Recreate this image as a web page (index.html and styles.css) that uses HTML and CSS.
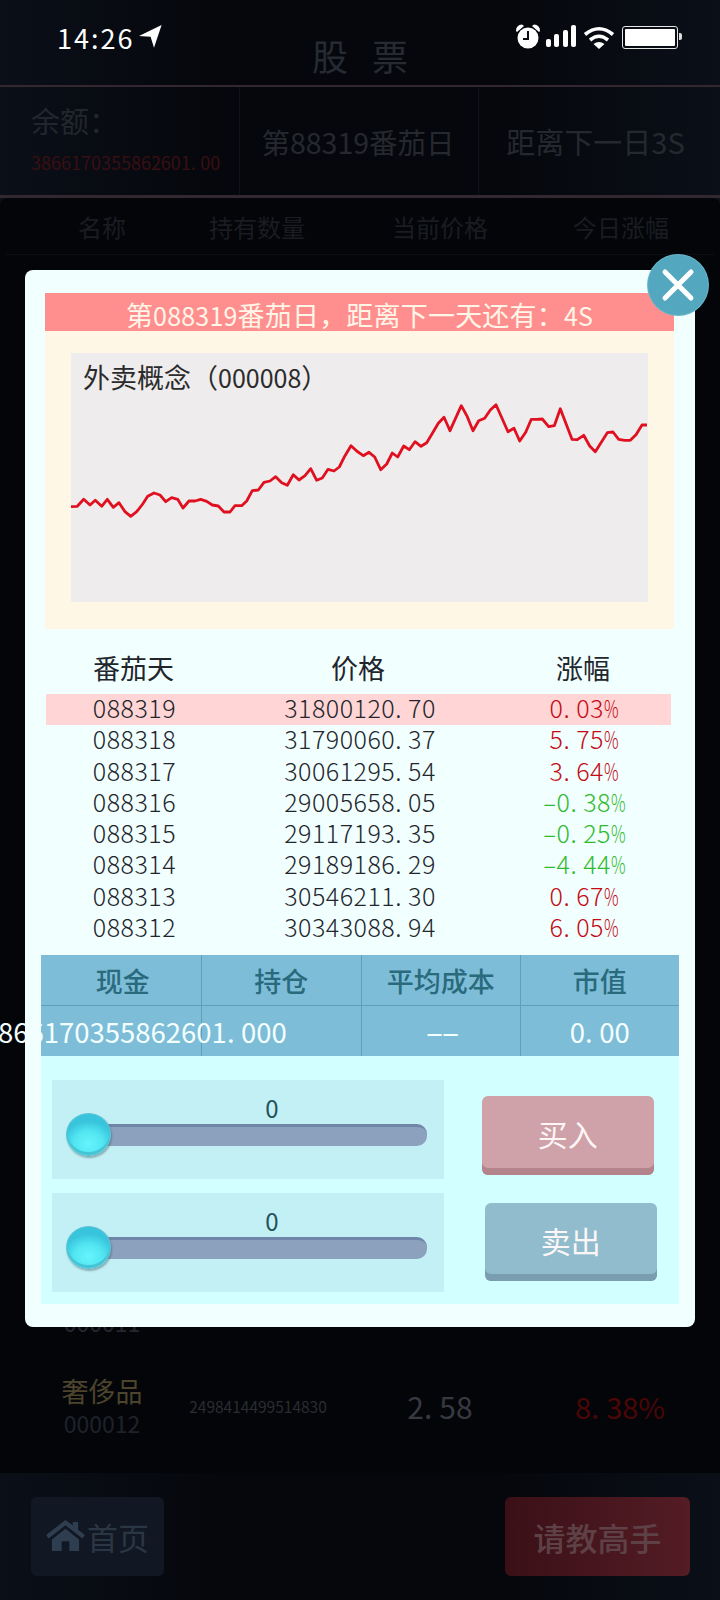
FILE: index.html
```html
<!DOCTYPE html>
<html lang="zh">
<head>
<meta charset="utf-8">
<title>股票</title>
<link rel="stylesheet" href="styles.css">
</head>
<body>
<div class="page">
  <header class="header">
    <div class="status">
      <div class="status-left">
        <span class="clock">14:26</span>
        <svg class="arrow" viewBox="0 0 23 23"><polygon points="22.6,0 0,11 11.6,11.7 15,22.7" fill="#fff"/></svg>
      </div>
      <div class="status-right">
        <svg class="alarm" viewBox="0 0 26 25"><path d="M1 7 Q1 1 7 0.5 L9 2 L2 8z M25 7 Q25 1 19 0.5 L17 2 L24 8z" fill="#fff"/><circle cx="13" cy="14" r="10.5" fill="#fff"/><path d="M13 7v8H8" fill="none" stroke="#0a0d15" stroke-width="2"/></svg>
        <div class="bars"><i class="b1"></i><i class="b2"></i><i class="b3"></i><i class="b4"></i></div>
        <svg class="wifi" viewBox="0 0 32 23"><path d="M2 8.500 Q16 -3 30 8.500 M7 14 Q16 6.500 25 14" fill="none" stroke="#fff" stroke-width="3.600"/><path d="M16 23 L10.500 18 Q16 14 21.500 18z" fill="#fff"/></svg>
        <div class="battery"><div class="battery-fill"></div></div>
      </div>
    </div>
    <h1 class="title">股票</h1>
  </header>
  <section class="info">
    <div class="info-cell info-balance">
      <div class="balance-label">余额：</div>
      <div class="balance-value">3866170355862601<span class="dot-sm">.</span>00</div>
    </div>
    <div class="info-cell info-day">第88319番茄日</div>
    <div class="info-cell info-next">距离下一日3S</div>
  </section>
  <section class="panel">
    <div class="panel-head">
      <span>名称</span><span>持有数量</span><span>当前价格</span><span>今日涨幅</span>
    </div>
    <div class="stock-list">
      <div class="stock">
        <div class="stock-name"><span class="name-text">&nbsp;</span><span class="code code-top">000011</span></div>
      </div>
      <div class="stock">
        <div class="stock-name"><span class="name-text">奢侈品</span><span class="code">000012</span></div>
        <div class="stock-qty">2498414499514830</div>
        <div class="stock-price">2<span class="dot">.</span>58</div>
        <div class="stock-change">8<span class="dot">.</span>38%</div>
      </div>
    </div>
  </section>
  <footer class="footer">
    <div class="btn-home">
      <svg class="home-icon" viewBox="0 0 40 32"><path d="M20 0 L0 15.500 L2.500 19 L20 5.500 L37.500 19 L40 15.500 L33 10 V2 H27.500 V5.800z" fill="#2e3d50"/><path d="M6 20 L20 9 L34 20 V32 H24 V22 H16 V32 H6z" fill="#2e3d50"/></svg>
      <span>首页</span>
    </div>
    <div class="btn-ask">请教高手</div>
  </footer>

  <div class="modal">
    <button class="close" aria-label="关闭">
      <svg viewBox="0 0 60 60"><path d="M17 17 L43 43 M43 17 L17 43" stroke="#fff" stroke-width="5" stroke-linecap="round"/></svg>
    </button>
    <div class="banner">第<span class="num">088319</span>番茄日，距离下一天还有：<span class="num">4S</span></div>
    <div class="chart-wrap">
      <div class="chart">
        <div class="chart-title">外卖概念（<span class="num">000008</span>）</div>
        <svg class="chart-svg" viewBox="71 353 577 249" preserveAspectRatio="none">
          <polyline fill="none" stroke="#e01020" stroke-width="2.800" stroke-linejoin="round" points="71,506.700 77.300,506.300 83.700,499.300 90,505 95.300,500.300 101.700,506.300 107.300,499.300 113.300,507.300 119,502.700 125,511.700 130.700,516.300 136.700,511.700 142.700,504 147.700,496.300 154,493 160,495 165.700,501.700 171.700,497.700 177.700,499.300 183,508 189,501 195,501 200.700,499.300 206.700,501.300 212.300,505 218.300,506 224,512 230,512 235,505.700 241.700,505.700 246.700,501 252.300,490.700 258.300,490 264,482.300 270,481 275.700,476.700 281.700,482.700 287.300,485.300 293.300,474.700 299,480 305,475.700 310.700,468.700 316.700,480.300 322.300,478 328,469.300 334,471 339.300,467 345,455.700 351,445.700 356.700,451 360,453.300 363.300,455.700 369,452.300 374.700,457 380.700,469.700 386.700,464 392.300,453 397.700,457 403.700,446 409.300,449.700 415,441.700 421,446.300 426.700,442.700 432.700,432.700 438.300,423.300 444,417.300 450,430.700 461.300,405.700 467.300,416.700 473,430.700 478.700,420.700 484.700,418.300 490.300,410 496,404.700 508,431.700 514,428.300 519.700,441 525.700,432.300 531.300,419.300 537,419.300 542.300,419 548.700,426.700 554.300,425.700 560.300,408.700 572,439.300 577.300,439.700 583.700,435.300 589.700,446 595.300,451.700 607.300,432.700 613,432 618.700,439.300 624.700,440.300 630.300,440.300 636,434.700 642,425 647,425"/>
        </svg>
      </div>
    </div>

    <div class="history">
      <div class="hist-head"><span>番茄天</span><span>价格</span><span>涨幅</span></div>
      <div class="hist-row current"><span>088319</span><span>31800120<span class="dot">.</span>70</span><span class="up">0<span class="dot">.</span>03<span class="pct">%</span></span></div>
      <div class="hist-row"><span>088318</span><span>31790060<span class="dot">.</span>37</span><span class="up">5<span class="dot">.</span>75<span class="pct">%</span></span></div>
      <div class="hist-row"><span>088317</span><span>30061295<span class="dot">.</span>54</span><span class="up">3<span class="dot">.</span>64<span class="pct">%</span></span></div>
      <div class="hist-row"><span>088316</span><span>29005658<span class="dot">.</span>05</span><span class="down"><span class="minus">-</span>0<span class="dot">.</span>38<span class="pct">%</span></span></div>
      <div class="hist-row"><span>088315</span><span>29117193<span class="dot">.</span>35</span><span class="down"><span class="minus">-</span>0<span class="dot">.</span>25<span class="pct">%</span></span></div>
      <div class="hist-row"><span>088314</span><span>29189186<span class="dot">.</span>29</span><span class="down"><span class="minus">-</span>4<span class="dot">.</span>44<span class="pct">%</span></span></div>
      <div class="hist-row"><span>088313</span><span>30546211<span class="dot">.</span>30</span><span class="up">0<span class="dot">.</span>67<span class="pct">%</span></span></div>
      <div class="hist-row"><span>088312</span><span>30343088<span class="dot">.</span>94</span><span class="up">6<span class="dot">.</span>05<span class="pct">%</span></span></div>
    </div>

    <div class="holdings">
      <div class="h-cell h-th h-first">现金</div>
      <div class="h-cell h-th">持仓</div>
      <div class="h-cell h-th">平均成本</div>
      <div class="h-cell h-th">市值</div>
      <div class="h-cell h-td h-cash">3866170355862601<span class="dot">.</span>000</div>
      <div class="h-cell h-td"></div>
      <div class="h-cell h-td"><span class="dash">--</span></div>
      <div class="h-cell h-td">0<span class="dot">.</span>00</div>
    </div>

    <div class="controls">
      <div class="sliders">
        <div class="slider-box">
          <div class="slider-value">0</div>
          <div class="track"><div class="thumb"></div></div>
        </div>
        <div class="slider-box">
          <div class="slider-value">0</div>
          <div class="track"><div class="thumb"></div></div>
        </div>
      </div>
      <div class="actions">
        <div class="action buy">买入</div>
        <div class="action sell">卖出</div>
      </div>
    </div>
  </div>
</div>
</body>
</html>
```

FILE: styles.css
```css
* { box-sizing: border-box; }
html, body { margin: 0; padding: 0; }
body {
  background: #05070c;
  font-family: "Noto Sans CJK SC", "Noto Sans", sans-serif;
  text-spacing-trim: space-all;
}
.page {
  position: relative;
  width: 720px;
  height: 1600px;
  overflow: hidden;
  display: flex;
  flex-direction: column;
  background: linear-gradient(90deg, #0b0f18, #05070c 30%, #05070c 70%, #0b0f18);
}
.dot { letter-spacing: 6.500px; }
.dot-sm { letter-spacing: 4.500px; }
.num { font-size: 25px; }
.pct { display: inline-block; width: 14.500px; transform: scaleX(0.650); transform-origin: left center; }
.minus { display: inline-block; width: 14px; text-align: center; transform: scaleX(1.700); }
.dash { display: inline-block; letter-spacing: -1.500px; transform: scaleX(2); }

/* header */
.header { position: relative; height: 87px; border-bottom: 2px solid #33282f; }
.title {
  margin: 0;
  padding-top: 32px;
  font-size: 36px;
  line-height: 46px;
  font-weight: 400;
  letter-spacing: 24px;
  text-indent: 24px;
  text-align: center;
  color: #262b33;
}
.status {
  position: absolute;
  left: 0; right: 0; top: 0;
  height: 60px;
  display: flex;
  justify-content: space-between;
  align-items: flex-start;
  padding: 24px 40px 0 57px;
}
.status-left { display: flex; align-items: flex-start; }
.clock { font-size: 27px; line-height: 28px; letter-spacing: 2px; color: #fff; }
.arrow { width: 23px; height: 23px; margin: 1px 0 0 5px; }
.status-right { display: flex; align-items: flex-start; }
.alarm { width: 26px; height: 25px; }
.bars { display: flex; align-items: flex-end; gap: 3.500px; height: 22px; margin: 1px 0 0 5px; }
.bars i { display: block; width: 5px; background: #fff; border-radius: 2px; }
.b1 { height: 8px; }
.b2 { height: 13px; }
.b3 { height: 17px; }
.b4 { height: 22px; }
.wifi { width: 32px; height: 23px; margin: 2px 0 0 7px; }
.battery {
  position: relative;
  width: 56px;
  height: 23px;
  margin: 2px 2px 0 7px;
  padding: 2px;
  border: 1.500px solid #e6e6e6;
  border-radius: 3px;
}
.battery::after {
  content: "";
  position: absolute;
  right: -4.500px; top: 6px;
  width: 3px; height: 7px;
  background: #ddd;
  border-radius: 0 2px 2px 0;
}
.battery-fill { height: 100%; background: #fff; border-radius: 1px; }

/* info */
.info {
  height: 111px;
  display: grid;
  grid-template-columns: 240px 239px 241px;
  border-bottom: 3px solid #33282f;
  color: #25282f;
}
.info-cell {
  display: flex;
  align-items: center;
  justify-content: center;
  font-size: 28px;
  border-right: 1px solid #101219;
}
.info-cell:last-child { border-right: 0; }
.info-day { font-size: 28.500px; padding-right: 2px; }
.info-next { font-size: 29px; padding-right: 8px; }
.info-balance { flex-direction: column; align-items: flex-start; padding-left: 31px; justify-content: flex-start; }
.balance-label { font-size: 29px; line-height: 36px; margin-top: 15px; color: #22262e; }
.balance-value { font-size: 18px; line-height: 24px; margin-top: 12px; color: #3a0f12; white-space: nowrap; }

/* panel */
.panel {
  height: 1275px;
  display: flex;
  flex-direction: column;
  background: #040509;
  border-radius: 8px 8px 0 0;
}
.panel-head {
  height: 57px;
  flex: none;
  margin: 0 6px;
  display: grid;
  grid-template-columns: 192px 118px 248px 114px;
  align-items: center;
  justify-items: center;
  font-size: 24px;
  color: #1a1c22;
  border-bottom: 1px solid #0d0e14;
}
.stock-list { flex: 1; display: flex; flex-direction: column; justify-content: flex-end; padding-bottom: 18px; }
.stock {
  height: 100px;
  display: grid;
  grid-template-columns: 204px 108px 256px 104px;
  align-items: center;
  justify-items: center;
}
.stock-name { display: flex; flex-direction: column; align-items: center; }
.name-text { font-size: 27px; line-height: 36px; color: #4c442c; }
.code { font-size: 23px; line-height: 28px; color: #1f222a; }
.code-top { margin-top: -3px; color: #24272e; }
.stock-qty { font-size: 15.500px; color: #2a2c31; margin-top: 2px; white-space: nowrap; }
.stock-price { font-size: 30px; color: #363a40; margin-top: 2px; white-space: nowrap; }
.stock-price .dot, .stock-change .dot { letter-spacing: 7px; }
.stock-change { font-size: 29px; color: #4c0606; margin-top: 2px; white-space: nowrap; }

/* footer */
.footer {
  flex: 1;
  display: flex;
  justify-content: space-between;
  align-items: flex-start;
  padding: 24px 30px 0 31px;
}
.btn-home {
  width: 133px;
  height: 79px;
  display: flex;
  align-items: center;
  padding-left: 15px;
  gap: 2px;
  border-radius: 6px;
  background: #111823;
  font-size: 31px;
  color: #2b3644;
}
.home-icon { width: 39px; height: 31px; margin-top: -2px; }
.btn-ask {
  width: 185px;
  height: 79px;
  display: flex;
  align-items: center;
  justify-content: center;
  border-radius: 6px;
  background: linear-gradient(90deg, #3a1016, #541c25);
  font-size: 32px;
  font-weight: 500;
  color: #5e4146;
}

/* modal */
.modal {
  position: absolute;
  left: 25px;
  top: 270px;
  width: 670px;
  height: 1057px;
  padding-top: 23px;
  background: #f2ffff;
  border-radius: 8px;
}
.close {
  position: absolute;
  right: -13px;
  top: -15px;
  width: 60px;
  height: 60px;
  padding: 0;
  border: 0;
  border-radius: 50%;
  background: #53a8bf;
  box-shadow: 0 0 0 1px #6ab7cb;
}
.close svg { display: block; width: 60px; height: 60px; }
.banner {
  height: 38px;
  margin: 0 21px 0 20px;
  padding-top: 6px;
  background: #ff8f8f;
  color: #fff6e8;
  font-size: 27px;
  line-height: 32px;
  letter-spacing: 0.200px;
  text-align: center;
  white-space: nowrap;
}
.chart-wrap {
  height: 298px;
  margin: 0 21px 0 20px;
  padding: 22px 26px 27px;
  background: #fff7e5;
}
.chart { position: relative; height: 249px; background: #eeecec; }
.chart-title {
  position: absolute;
  left: 12px;
  top: 6px;
  font-size: 27px;
  line-height: 36px;
  color: #2b2b2b;
  white-space: nowrap;
}
.chart-svg { display: block; width: 100%; height: 100%; }
.history { margin: 0 24px 0 21px; color: #22262c; }
.hist-head, .hist-row {
  display: grid;
  grid-template-columns: 175px 274px 176px;
  justify-items: center;
  align-items: center;
}
.hist-head { height: 65px; padding-top: 12px; font-size: 27px; }
.hist-row {
  height: 31.250px;
  grid-template-columns: 177px 274px 174px;
  align-items: baseline;
  font-size: 25px;
  line-height: 27px;
  font-weight: 300;
  letter-spacing: 0.500px;
}
.current { background: #ffd5d5; }
.up { color: #c40a14; }
.down { color: #30ba30; }
.holdings {
  margin: 11px 0 0 16px;
  width: 638px;
  height: 101px;
  display: grid;
  grid-template-columns: 160.500px 160.500px 158.500px 158.500px;
  grid-template-rows: 51px 50px;
  background: #7ebdd7;
}
.h-cell {
  display: flex;
  align-items: center;
  justify-content: center;
  white-space: nowrap;
  border-right: 1px solid #5f9fb8;
}
.h-cell:nth-child(4n) { border-right: 0; }
.h-th { font-size: 27px; font-weight: 500; color: #2a6a7d; border-bottom: 1px solid #5f9fb8; }
.h-first { padding-left: 4px; }
.h-td { font-size: 27.500px; color: #f4ffff; }
.h-cash { padding-left: 28px; }
.controls {
  display: flex;
  margin-left: 16px;
  width: 638px;
  height: 248px;
  padding: 24px 0 0 11px;
  background: #d2ffff;
}
.sliders { width: 392px; display: flex; flex-direction: column; gap: 14px; }
.slider-box {
  height: 99px;
  padding-top: 14px;
  background: #c3f0f5;
}
.slider-value {
  height: 30px;
  padding-left: 48px;
  text-align: center;
  font-size: 24px;
  line-height: 28px;
  color: #26505c;
}
.track {
  position: relative;
  height: 22px;
  margin: 0 17px 0 34px;
  background: #8ba1bd;
  border-top: 3px solid #6f86a8;
  border-radius: 0 10px 10px 0;
}
.thumb {
  position: absolute;
  left: -20px;
  top: -14px;
  width: 45px;
  height: 43px;
  border-radius: 50%;
  background: radial-gradient(ellipse 60% 55% at 50% 72%, #66f4fc 0%, #52e6f2 55%, #38c4dc 100%);
  border: 1px solid #5cc4d4;
  box-shadow: inset 0 -3px 0 #44c4d4, 1px 2px 2px rgba(60, 90, 100, 0.45);
}
.actions { display: flex; flex-direction: column; padding-top: 16px; margin-left: 38px; gap: 28px; }
.action {
  width: 171.500px;
  height: 79px;
  padding-bottom: 6px;
  display: flex;
  align-items: center;
  justify-content: center;
  border-radius: 6px;
  font-size: 30px;
  color: #fdf6f6;
}
.buy { background: #cfa1a8; box-shadow: inset 0 -7px 0 #b3848b; }
.sell { margin-left: 3px; height: 78px; padding-bottom: 4px; background: #91bccd; box-shadow: inset 0 -7px 0 #7a9db0; }
```
